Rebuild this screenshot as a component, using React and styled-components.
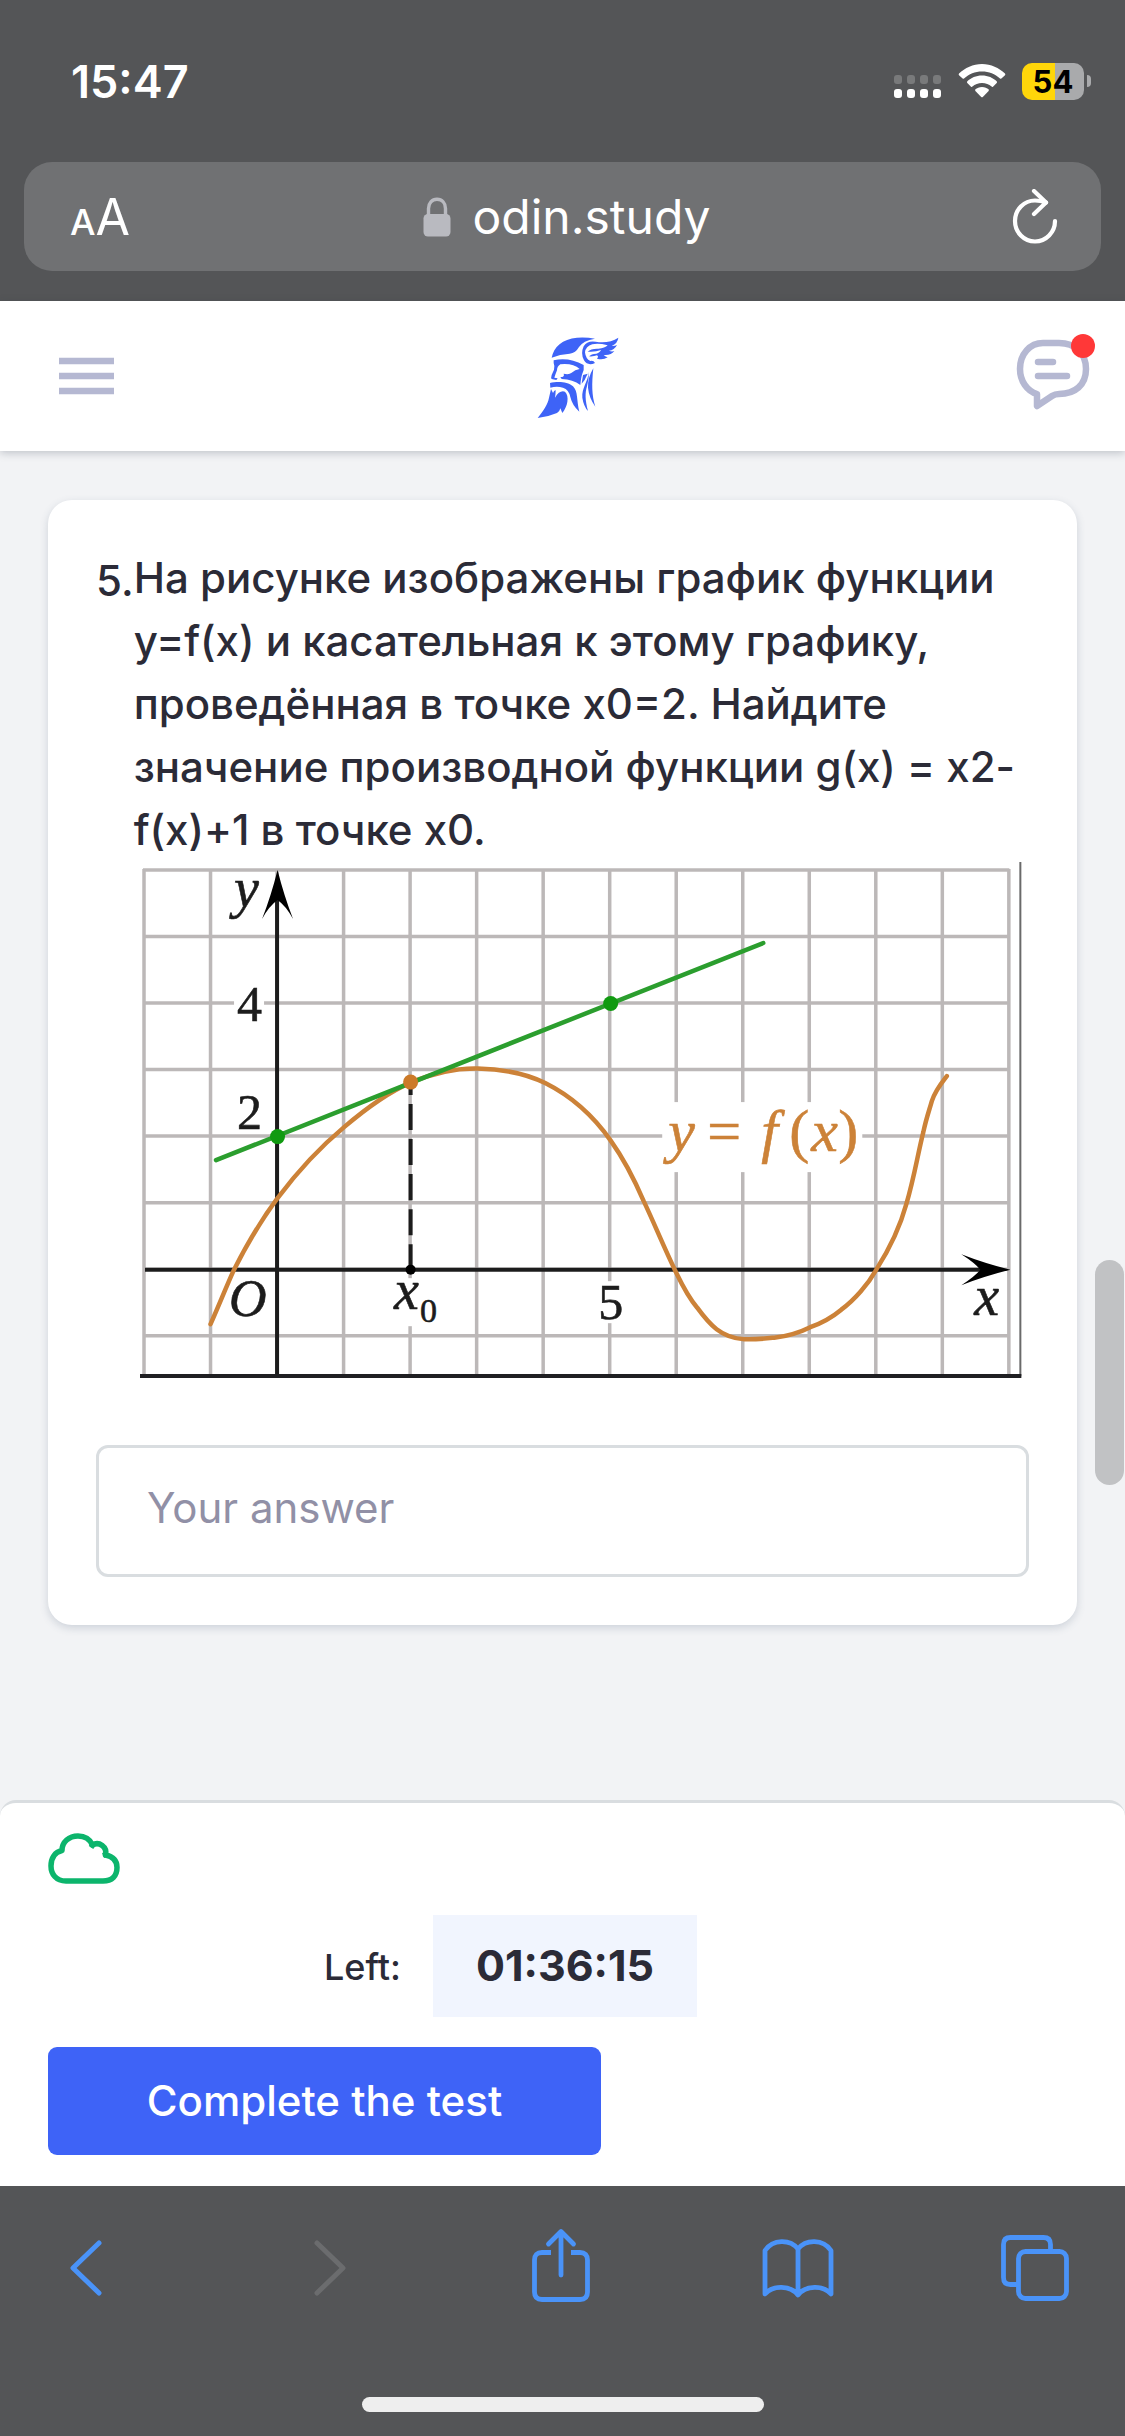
import { useState } from "react";
import styled, { createGlobalStyle } from "styled-components";

const GlobalStyle = createGlobalStyle`
    * {
        box-sizing: border-box;
    }
    body {
        margin: 0;
        background-color: #545557;
        font-family: Inter, "Liberation Sans", sans-serif;
        font-optical-sizing: none;
        color: #2b2b37;
    }
    button, input {
        font-family: inherit;
        font-optical-sizing: inherit;
    }
    svg {
        display: block;
    }
`;

const Page = styled.div`
    min-height: 100vh;
    display: flex;
    flex-direction: column;
`;

const StatusBar = styled.div`
    height: 162px;
    padding: 0 34px 0 71px;
    display: flex;
    align-items: center;
    justify-content: space-between;
    color: white;
`;

const Time = styled.span`
    font-size: 45px;
    font-weight: 600;
`;

const StatusIcons = styled.div`
    display: flex;
    align-items: center;
    gap: 16px;
`;

const Battery = styled.div`
    display: flex;
    align-items: center;
    gap: 3px;
`;

const BatteryBody = styled.div`
    width: 62px;
    height: 37px;
    border-radius: 10px;
    display: flex;
    align-items: center;
    justify-content: center;
    background: linear-gradient(to right, #ffd60a ${props=>props.level}%, #a9aaac ${props=>props.level}%);
    color: black;
    font-size: 31px;
    font-weight: 700;
`;

const BatteryTip = styled.div`
    width: 4px;
    height: 12px;
    border-radius: 0 4px 4px 0;
    background-color: #a9aaac;
`;

const AddressBar = styled.div`
    height: 109px;
    margin: 0 24px 30px;
    padding: 0 43px 0 46px;
    border-radius: 28px;
    display: grid;
    grid-template-columns: 1fr auto 1fr;
    align-items: center;
    background-color: #707173;
    color: white;
`;

const IconButton = styled.button`
    display: flex;
    align-items: center;
    padding: 0;
    border: none;
    background: none;
    color: ${props=>props.$color || "inherit"};
    justify-self: ${props=>props.$side || "auto"};
    cursor: pointer;
`;

const TextSizeButton = styled(IconButton)`
    align-items: baseline;
    font-size: 50px;
`;

const SmallLetter = styled.span`
    font-size: 36px;
    font-weight: 500;
`;

const Address = styled.a`
    padding-left: 6px;
    display: flex;
    align-items: center;
    gap: 21px;
    color: inherit;
    font-size: 48px;
    text-decoration: none;
`;

const Header = styled.header`
    height: 150px;
    padding: 0 29px 0 59px;
    display: grid;
    grid-template-columns: 1fr auto 1fr;
    align-items: center;
    background-color: white;
    box-shadow: 0 2px 8px rgba(40, 50, 70, 0.25);
    z-index: 1;
`;

const Main = styled.main`
    flex: 1;
    position: relative;
    padding: 49px 48px;
    background-color: #f2f3f5;
`;

const Card = styled.section`
    padding: 46px 48px 48px;
    border-radius: 24px;
    background-color: white;
    box-shadow: 0 3px 8px rgba(60, 80, 110, 0.2);
`;

const Question = styled.div`
    display: flex;
    font-size: 42px;
    font-weight: 500;
    line-height: 63px;
`;

const Number = styled.span`
    padding-top: 3px;
    flex-shrink: 0;
`;

const QuestionBody = styled.div`
    flex: 1;
`;

const QuestionText = styled.p`
    margin: 0;
`;

const Figure = styled.figure`
    margin: 1px 7px 0 6px;
`;

const Graph = styled.svg`
    width: 100%;
    height: auto;
    font-family: "Liberation Serif", serif;
    font-size: 50px;
    font-weight: 400;
`;

const Answer = styled.input`
    width: 100%;
    height: 132px;
    margin-top: 67px;
    padding: 0 48px 8px;
    display: block;
    border: 3px solid #d9dde0;
    border-radius: 12px;
    background-color: white;
    color: inherit;
    font-size: 42px;

    &::placeholder {
        color: #9190a6;
        opacity: 1;
    }
`;

const Scrollbar = styled.div`
    position: absolute;
    top: 809px;
    right: 1px;
    width: 29px;
    height: 225px;
    border-radius: 15px;
    background-color: #c1c2c4;
`;

const FooterWrap = styled.div`
    background-color: #f2f3f5;
`;

const Footer = styled.footer`
    padding: 30px 48px 31px;
    border-top: 3px solid #d9dde0;
    border-radius: 16px 16px 0 0;
    background-color: white;
`;

const Timer = styled.div`
    margin: 30px 0;
    padding-right: 104px;
    display: flex;
    align-items: center;
    justify-content: center;
    gap: 32px;
`;

const TimerLabel = styled.span`
    padding-top: 2px;
    font-size: 36px;
    font-weight: 500;
`;

const TimerValue = styled.time`
    width: 264px;
    height: 102px;
    padding-bottom: 2px;
    display: flex;
    align-items: center;
    justify-content: center;
    background-color: #f1f5fe;
    font-size: 43px;
    font-weight: 700;
`;

const CompleteButton = styled.button`
    width: 553px;
    height: 108px;
    padding: 0 0 2px;
    display: block;
    border: none;
    border-radius: 9px;
    background-color: #3e63f7;
    color: white;
    font-size: 42px;
    font-weight: 500;
    cursor: pointer;
`;

const Toolbar = styled.nav`
    height: 211px;
    padding: 41px 54px 0 50px;
    display: flex;
    align-items: flex-start;
    justify-content: space-between;
    color: #4a93f8;
`;

const ToolButton = styled(IconButton)`
    width: 72px;
    justify-content: center;
`;

const HomeIndicator = styled.div`
    width: 402px;
    height: 15px;
    margin: 0 auto 24px;
    border-radius: 8px;
    background-color: #eeeeee;
`;

const SignalIcon = () => (
    <svg width="48" height="36" viewBox="0 0 48 36" fill="white">
        {[0, 13, 26, 39].map(x=>(
            <g key={x}>
                <rect x={x} y="12" width="8" height="9" rx="3" opacity="0.22"/>
                <rect x={x} y="26" width="8" height="9" rx="3"/>
            </g>
        ))}
    </svg>
)

const WifiIcon = () => (
    <svg width="48" height="36" viewBox="0 0 48 36" fill="white">
        <path d="M24 1C15 1 7 5 1 10.500Q0.300 11.500 1 12.200L4.600 15.600Q5.300 16 6 15.400C11 11 17 8.400 24 8.400S37 11 42 15.400Q42.700 16 43.400 15.600L47 12.200Q47.700 11.500 47 10.500C41 5 33 1 24 1Z"/>
        <path d="M24 12.600C18 12.600 13 15 9.300 18.300Q8.600 19.200 9.300 20L13 23.700Q13.700 24.200 14.400 23.600C17 21.300 20.300 20 24 20S31 21.300 33.600 23.600Q34.300 24.200 35 23.700L38.700 20Q39.400 19.200 38.700 18.300C35 15 30 12.600 24 12.600Z"/>
        <path d="M24 24C21.200 24 19 25 17.400 26.300Q16.800 27.200 17.400 28L23.200 34Q24 34.700 24.800 34L30.600 28Q31.200 27.200 30.600 26.300C29 25 26.800 24 24 24Z"/>
    </svg>
)

const LockIcon = () => (
    <svg width="28" height="40" viewBox="0 0 28 40">
        <path d="M5.500 19V11.500C5.500 6 9 2.300 14 2.300S22.500 6 22.500 11.500V19" fill="none" stroke="#b9bac0" strokeWidth="3.400"/>
        <rect x="0.500" y="17" width="27" height="22.500" rx="4.500" fill="#b9bac0"/>
    </svg>
)

const ReloadIcon = () => (
    <svg width="46" height="56" viewBox="0 0 46 56" fill="none" stroke="white" strokeWidth="4.200" strokeLinecap="round" strokeLinejoin="round">
        <path d="M43 32A20 20.500 0 1 1 23 11.500C27 11.500 30 12 34 13.500"/>
        <path d="M22 2L34 13.500L22 25"/>
    </svg>
)

const MenuIcon = () => (
    <svg width="55" height="38" viewBox="0 0 55 38" stroke="#b5b8d2" strokeWidth="6.500">
        <path d="M0 4H55M0 19H55M0 34H55"/>
    </svg>
)

const Logo = () => (
    <svg width="82" height="86" viewBox="106 68 246 258" fill="#3e63f7">
        <path d="M150 142C156 110 182 86 226 82Q254 80 280 85Q244 91 232 110Q222 128 204 130Q174 132 150 142Z"/>
        <path d="M280 158Q258 168 247 150Q236 130 246 108Q256 90 282 94Q322 100 350 82Q348 99 330 107Q342 107 346 104Q338 120 322 121Q330 125 338 122Q328 136 306 134Q312 140 318 141Q304 150 286 145Q292 139 286 135Q276 139 262 138Q268 131 284 130Q296 126 298 119Q280 126 258 124Q268 114 290 115Q310 114 318 105Q290 98 272 102Q252 108 250 126Q252 146 266 152Q276 150 280 158Z"/>
        <path d="M156 150Q202 140 246 164Q248 180 242 190Q238 200 236 224Q214 208 180 206L176 200Q190 200 186 190Q202 194 210 187Q220 178 234 176Q214 158 176 162Q166 168 166 180Q162 190 158 202L168 204L164 209L150 206Q147 204 150 194L157 178Q160 168 156 158Z"/>
        <path d="M145 218C164 214 196 212 214 228C230 244 224 270 233 304Q212 286 206 260Q202 238 184 232Q166 226 146 232Z"/>
        <path d="M148 236L154 248Q158 238 162 240Q162 250 160 262Q174 238 190 244C204 258 198 288 182 308L176 294Q174 304 166 308Q138 320 108 323C124 302 138 284 142 262Z"/>
        <path d="M262 184C258 216 240 232 242 262Q246 288 259 302C250 268 250 248 256 228Q262 204 262 184Z"/>
        <path d="M275 174Q258 202 259 232Q262 262 281 289C270 254 270 222 275 174Z"/>
        <path d="M244 194L258 190Q250 210 240 220Z"/>
    </svg>
)

const ChatIcon = () => (
    <svg width="80" height="90" viewBox="0 0 80 90" fill="none" stroke="#b5b8d2" strokeWidth="6.500" strokeLinecap="round" strokeLinejoin="round">
        <path d="M27 12H43C59 12 70 22 70 38S59 63 43 63Q39 63 36 65L21 75V63C11 60 4 50 4 38C4 23 14 12 27 12Z"/>
        <path d="M22 31H37M22 45H51"/>
        <circle cx="67" cy="15" r="12" fill="#ff3838" stroke="none"/>
    </svg>
)

const CloudIcon = () => (
    <svg width="72" height="52" viewBox="0 0 72 52" fill="none" stroke="#0cb56c" strokeWidth="5.500" strokeLinejoin="round">
        <path d="M18 48C8 48 3 41 3 33C3 25 7 19 14 17.500C14 9 21 3 30 3C37 3 42 6.500 44.500 12C51 8 59.500 14 57.500 22C65 23.500 69 28 69 34.500C69 43 64 48 55 48Z"/>
        <path d="M43 14.500L45.500 11M55 22.500L59 21"/>
    </svg>
)

const BackIcon = () => (
    <svg width="34" height="80" viewBox="0 0 34 80" fill="none" stroke="currentColor" strokeWidth="5" strokeLinecap="round" strokeLinejoin="round">
        <path d="M30 16L4 41L30 66"/>
    </svg>
)

const ForwardIcon = () => (
    <svg width="48" height="80" viewBox="0 0 48 80" fill="none" stroke="currentColor" strokeWidth="5" strokeLinecap="round" strokeLinejoin="round">
        <path d="M18 16L44 41L18 66"/>
    </svg>
)

const ShareIcon = () => (
    <svg width="58" height="80" viewBox="0 0 58 80" fill="none" stroke="currentColor" strokeWidth="4.800" strokeLinejoin="round">
        <path d="M19 25.500H10Q2.500 25.500 2.500 33V65Q2.500 72.500 10 72.500H48Q55.500 72.500 55.500 65V33Q55.500 25.500 48 25.500H39"/>
        <path d="M29 48V6M16.500 17L29 4.500L41.500 17" strokeLinecap="round"/>
    </svg>
)

const BookIcon = () => (
    <svg width="72" height="80" viewBox="0 0 72 80" fill="none" stroke="currentColor" strokeWidth="4.800" strokeLinejoin="round">
        <path d="M36 22C28 12 11 12 3 23.500V67C11 58 28 58 36 68C44 58 61 58 69 67V23.500C61 12 44 12 36 22V68"/>
    </svg>
)

const TabsIcon = () => (
    <svg width="68" height="80" viewBox="0 0 68 80" fill="none" stroke="currentColor" strokeWidth="4.800">
        <rect x="17.500" y="24.500" width="48" height="47" rx="7"/>
        <path d="M17.500 57.500H9.500Q2.500 57.500 2.500 50.500V17.500Q2.500 10.500 9.500 10.500H42.500Q49.500 10.500 49.500 17.500V24.500"/>
    </svg>
)

const columns = Array.from({ length: 14 }, (_, i)=>144 + i * 66.5)
const rows = Array.from({ length: 8 }, (_, i)=>870 + i * 66.5)

const FunctionGraph = () => (
    <Graph viewBox="140 862 882 516" role="img" aria-label="y = f(x)">
        <g stroke="#bcb8b8" strokeWidth="3.500">
            {columns.map(x=><line key={x} x1={x} y1="869" x2={x} y2="1375"/>)}
            {rows.map(y=><line key={y} x1="143" y1={y} x2="1009" y2={y}/>)}
        </g>
        <g fill="white">
            <rect x="234" y="985" width="30" height="40"/>
            <rect x="392" y="1278" width="48" height="48"/>
            <rect x="597" y="1281" width="28" height="42"/>
            <rect x="662" y="1102" width="200" height="70"/>
        </g>
        <g stroke="#1c1c1c" strokeWidth="4">
            <line x1="277" y1="890" x2="277" y2="1375"/>
            <line x1="145" y1="1269.500" x2="990" y2="1269.500"/>
            <line x1="410.500" y1="1085" x2="410.500" y2="1269" strokeDasharray="26 9" strokeDashoffset="16"/>
        </g>
        <path d="M277.500 870Q284 896 293 919Q286 906 277.500 900Q269 906 262 919Q271 896 277.500 870Z"/>
        <path d="M1010 1269.500Q984 1263 961 1254Q975 1263 980 1269.500Q975 1276 961 1285Q984 1276 1010 1269.500Z"/>
        <path
            d="M210.500 1324C219 1305 226 1287 234 1269.500C246 1246 261 1220 277.500 1198C297 1172 320 1147 344 1127C364 1110 386 1093 410.500 1082.500C431 1074 455 1068 477.500 1068.500C502 1069 525 1073 545 1083C571 1096 594 1117 610.500 1140.500C623 1158 634 1179 643.500 1201C654 1223 664 1248 676 1272.500C683 1287 689 1298 697 1307.500C709 1324 721 1338 744 1339C755 1339.500 764 1338.500 774 1337.500C787 1336 800 1332 810 1327C821 1323 832 1317 841 1309.500C854 1300 868 1284 876 1269.500C889 1249 900 1226 906 1204C914 1177 917 1156 923 1132C926 1118 929 1110 931.500 1101C935 1090 941 1083 946.500 1076"
            fill="none"
            stroke="#cc8238"
            strokeWidth="4.500"
            strokeLinecap="round"
        />
        <line x1="216" y1="1160" x2="763" y2="943" stroke="#2b9e2e" strokeWidth="4.500" strokeLinecap="round"/>
        <circle cx="277.500" cy="1136.500" r="7.500" fill="#109a10"/>
        <circle cx="610.500" cy="1003.500" r="7.500" fill="#109a10"/>
        <circle cx="410.500" cy="1082" r="7.500" fill="#cc7a28"/>
        <circle cx="410.500" cy="1269.500" r="5"/>
        <g fill="#1c1c1c" stroke="#1c1c1c" strokeWidth="0.600">
            <text x="237" y="1021">4</text>
            <text x="237" y="1129">2</text>
            <text x="598" y="1319">5</text>
            <text x="420" y="1322" fontSize="34">0</text>
        </g>
        <g fill="#1c1c1c" stroke="#1c1c1c" strokeWidth="0.600" fontStyle="italic" fontSize="56">
            <text x="234" y="907">y</text>
            <text x="229" y="1316" fontSize="52">O</text>
            <text x="394" y="1309">x</text>
            <text x="974" y="1315">x</text>
        </g>
        <g fill="#cc8238" stroke="#cc8238" strokeWidth="0.600" fontSize="60">
            <text x="668" y="1151" fontStyle="italic">y</text>
            <text x="707" y="1151">=</text>
            <text x="761" y="1151" fontStyle="italic">f</text>
            <text x="789" y="1151">(</text>
            <text x="811" y="1151" fontStyle="italic">x</text>
            <text x="838" y="1151">)</text>
        </g>
        <path d="M1020 862V1376" stroke="#6a6a6a" strokeWidth="2"/>
        <path d="M140 1376H1021" stroke="#1f1f22" strokeWidth="4.500"/>
    </Graph>
)

const App = () => {
    const [answer, setAnswer] = useState("")

    return (
        <Page>
            <GlobalStyle/>
            <StatusBar>
                <Time>15:47</Time>
                <StatusIcons>
                    <SignalIcon/>
                    <WifiIcon/>
                    <Battery>
                        <BatteryBody level={54}>54</BatteryBody>
                        <BatteryTip/>
                    </Battery>
                </StatusIcons>
            </StatusBar>
            <AddressBar>
                <TextSizeButton $side="start">
                    <SmallLetter>A</SmallLetter>A
                </TextSizeButton>
                <Address href="#">
                    <LockIcon/>
                    odin.study
                </Address>
                <IconButton $side="end" aria-label="Reload">
                    <ReloadIcon/>
                </IconButton>
            </AddressBar>
            <Header>
                <IconButton $side="start" aria-label="Menu">
                    <MenuIcon/>
                </IconButton>
                <Logo/>
                <IconButton $side="end" aria-label="Messages">
                    <ChatIcon/>
                </IconButton>
            </Header>
            <Main>
                <Card>
                    <Question>
                        <Number>5.</Number>
                        <QuestionBody>
                            <QuestionText>
                                На рисунке изображены график функции y=f(x) и касательная к этому графику, проведённая в точке x0=2. Найдите значение производной функции g(x) = x2-f(x)+1 в точке x0.
                            </QuestionText>
                            <Figure>
                                <FunctionGraph/>
                            </Figure>
                        </QuestionBody>
                    </Question>
                    <Answer
                        type="text"
                        placeholder="Your answer"
                        aria-label="Your answer"
                        value={answer}
                        onChange={e=>setAnswer(e.target.value)}
                    />
                </Card>
                <Scrollbar/>
            </Main>
            <FooterWrap>
                <Footer>
                    <CloudIcon/>
                    <Timer>
                        <TimerLabel>Left:</TimerLabel>
                        <TimerValue>01:36:15</TimerValue>
                    </Timer>
                    <CompleteButton>Complete the test</CompleteButton>
                </Footer>
            </FooterWrap>
            <Toolbar>
                <ToolButton aria-label="Back">
                    <BackIcon/>
                </ToolButton>
                <ToolButton aria-label="Forward" $color="#6b6c6e">
                    <ForwardIcon/>
                </ToolButton>
                <ToolButton aria-label="Share">
                    <ShareIcon/>
                </ToolButton>
                <ToolButton aria-label="Bookmarks">
                    <BookIcon/>
                </ToolButton>
                <ToolButton aria-label="Tabs">
                    <TabsIcon/>
                </ToolButton>
            </Toolbar>
            <HomeIndicator/>
        </Page>
    )
}

export default App
